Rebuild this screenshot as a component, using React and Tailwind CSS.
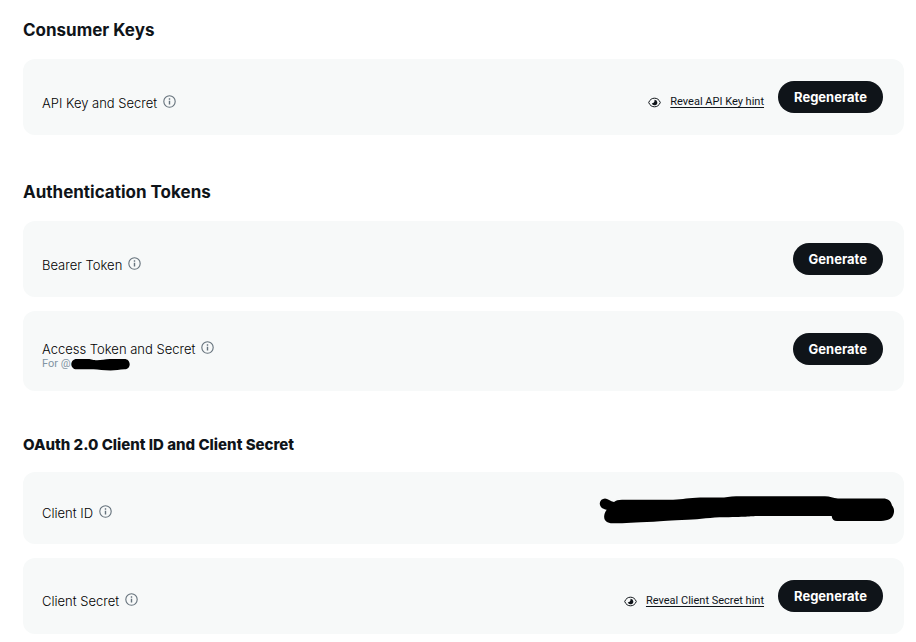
import clsx from 'clsx';

function InfoIcon() {
  return (
    <svg viewBox="0 0 13 13" className="h-[13px] w-[13px]" fill="none" aria-hidden="true">
      <circle cx="6.5" cy="6.5" r="5.7" stroke="#65727c" strokeWidth="1.1" />
      <path d="M6.5 5.8v3.8M6.5 3.3v1.5" stroke="#65727c" strokeWidth="1.4" />
    </svg>
  );
}

function EyeIcon() {
  return (
    <svg viewBox="0 0 13 11" className="mt-px h-[11px] w-[13px] shrink-0" fill="none" aria-hidden="true">
      <path
        d="M.7 5.500C1.900 2.500 4 1.200 6.500 1.200s4.600 1.300 5.800 4.300C11.100 8.500 9 9.800 6.500 9.800S1.900 8.500.7 5.500Z"
        stroke="#0f1419"
        strokeWidth="1"
      />
      <path d="M6.500 2.700a2.800 2.800 0 1 1-2.700 3.500c1.500.2 2.700-.9 2.700-2.200Z" fill="#0f1419" />
    </svg>
  );
}

function HandleMask() {
  return (
    <svg viewBox="0 0 60 13" className="-my-px h-[13px] w-[60px]" aria-hidden="true">
      <path
        d="M5.500 1H17c4 0 5 1.300 9 1.300S34 1.200 39 1h14.500c3 0 5.200 2.200 5.200 5.300s-2.200 5-5.200 5c-5 0-9 1.300-14 1.300-7 0-12-1.200-17-1.300h-17C2.500 11.300.3 9 .3 6.200S2.500 1 5.500 1Z"
        fill="#000"
      />
    </svg>
  );
}

function ClientIdMask() {
  return (
    <svg viewBox="0 0 296 28" className="mt-0.5 -mr-3 h-7 w-[296px]" aria-hidden="true">
      <path
        d="M6 2.500c2.500.2 5.500 2.700 9 3.500 2-1.400 4-2.300 8-2.300h51C84 3.500 90 1.700 101 1.500h24c5-.9 10-1.200 17-1.200h84c5 0 8 2 13 2.200h45c5 0 8 2.500 9 7 2 2.500 2.500 5 1.700 8-1.200 5-5 7-12.700 7.500h-44c-3.200 0-5-1.700-5.300-5h-72c-9 0-12 1-35 1.200-14 .1-24 2-37 2.500-17 .3-26 1.700-34 2-20 .5-27 1.600-41 1.600-6 0-9-3-8.500-7.500.2-2 1-4 2.500-6C2.500 13 .5 10 .8 7c.4-2.700 2.400-4.300 5.200-4.500Z"
        fill="#000"
      />
    </svg>
  );
}

function ActionButton({ children }) {
  return (
    <button
      type="button"
      className="h-8 rounded-full bg-[#0f1419] px-4 text-[13px] leading-5 font-bold text-white"
    >
      {children}
    </button>
  );
}

function RevealLink({ children }) {
  return (
    <a
      href="#reveal"
      className="mt-[13px] mr-3.5 flex items-center gap-[9px] font-['Roboto',sans-serif] text-[11px] leading-4"
    >
      <EyeIcon />
      <span className="underline underline-offset-2">{children}</span>
    </a>
  );
}

function CredentialRow({ label, note, className, labelClassName = 'mt-3', children }) {
  return (
    <div className={clsx('flex items-start justify-between rounded-xl bg-[#f7f9f9] pt-[22px] pr-[21px] pl-[19px]', className)}>
      <div className={labelClassName}>
        <div className="flex items-start gap-1.5">
          <span className="text-[13px] leading-5 font-light text-black">{label}</span>
          <button type="button" aria-label={`About ${label}`} className="mt-0.5">
            <InfoIcon />
          </button>
        </div>
        {note}
      </div>
      <div className="flex items-start">{children}</div>
    </div>
  );
}

export default function App() {
  return (
    <main className="bg-white pt-[18px] pr-3 pb-2 pl-[23px] font-['Inter',sans-serif] text-[#0f1419]">
      <section>
        <h2 className="mb-[17px] text-[17px] leading-6 font-bold">Consumer Keys</h2>
        <CredentialRow label="API Key and Secret" className="min-h-19">
          <RevealLink>Reveal API Key hint</RevealLink>
          <ActionButton>Regenerate</ActionButton>
        </CredentialRow>
      </section>

      <section className="mt-[45px]">
        <h2 className="mb-[17px] text-[17px] leading-6 font-bold">Authentication Tokens</h2>
        <div className="flex flex-col gap-3.5">
          <CredentialRow label="Bearer Token" className="min-h-19">
            <ActionButton>Generate</ActionButton>
          </CredentialRow>
          <CredentialRow
            label="Access Token and Secret"
            className="min-h-20"
            labelClassName="mt-1.5"
            note={
              <p className="-mt-px flex items-center font-['Roboto',sans-serif] text-[11px] leading-3 text-[#8295a3]">
                For @<HandleMask />
              </p>
            }
          >
            <ActionButton>Generate</ActionButton>
          </CredentialRow>
        </div>
      </section>

      <section className="mt-[42px]">
        <h2 className="mb-[15px] text-[15px] leading-6 font-extrabold">OAuth 2.0 Client ID and Client Secret</h2>
        <div className="flex flex-col gap-3.5">
          <CredentialRow label="Client ID" className="min-h-18" labelClassName="mt-[9px]">
            <ClientIdMask />
          </CredentialRow>
          <CredentialRow label="Client Secret" className="min-h-19" labelClassName="mt-[11px]">
            <RevealLink>Reveal Client Secret hint</RevealLink>
            <ActionButton>Regenerate</ActionButton>
          </CredentialRow>
        </div>
      </section>
    </main>
  );
}
